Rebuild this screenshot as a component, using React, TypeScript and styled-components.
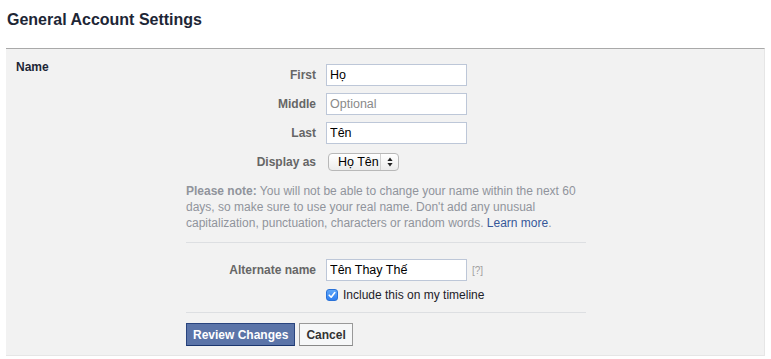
import React from 'react'
import styled, { createGlobalStyle } from 'styled-components'

const GlobalStyle = createGlobalStyle`
    body {
        margin: 0;
        background: #fff;
        font-family: "Liberation Sans", Arial, Helvetica, sans-serif;
        font-size: 12px;
        color: #1d2129;
    }
`;

const Header = styled.div`
    box-sizing: border-box;
    height: 48px;
    padding: 10px 7px 0;
`;

const Title = styled.h2`
    margin: 0;
    font-size: 16px;
    line-height: 20px;
    font-weight: bold;
    color: #1d2636;
`;

const Panel = styled.div`
    display: flex;
    width: 758px;
    margin: 0 6px;
    background: #f2f2f2;
    border-top: 1px solid #a9a9a9;
    border-right: 1px solid #e6e6e6;
    border-bottom: 1px solid #e6e6e6;
    padding-bottom: 9px;
`;

const Section = styled.div`
    box-sizing: border-box;
    width: 180px;
    padding: 11px 10px 0;
    font-weight: bold;
    font-size: 12px;
    line-height: 14px;
    color: #1d2636;
`;

const Content = styled.div`
    width: 400px;
    padding-top: 15px;
`;

const FieldGrid = styled.div<{ $top?: number }>`
    display: grid;
    grid-template-columns: 130px 141px auto;
    column-gap: 10px;
    row-gap: 7px;
    align-items: center;
    margin-top: ${p => p.$top || 0}px;
`;

const Label = styled.label`
    text-align: right;
    font-weight: bold;
    color: #666;
    font-size: 12px;
`;

const TextInput = styled.input`
    box-sizing: border-box;
    width: 141px;
    height: 22px;
    margin: 0;
    padding: 3px 3px 4px;
    border: 1px solid #bdc7d8;
    background: #fff;
    font-family: inherit;
    font-size: 12.5px;
    color: #000;
    outline: none;

    &::placeholder {
        color: #8a8a8a;
    }
`;

const Select = styled.div`
    box-sizing: border-box;
    display: flex;
    align-items: stretch;
    width: 71px;
    height: 18px;
    margin-left: 2px;
    border: 1px solid #b8b8b8;
    border-radius: 4px;
    background: linear-gradient(#ffffff, #ececec);
    font-size: 12.5px;
    color: #000;
`;

const SelectValue = styled.span`
    flex: 1;
    padding-left: 9px;
    line-height: 16px;
`;

const SelectArrows = styled.span`
    width: 17px;
    border-left: 1px solid #d0d0d0;
    display: flex;
    align-items: center;
    justify-content: center;
`;

const Note = styled.p`
    margin: 10px 0 0;
    font-size: 12px;
    line-height: 16px;
    color: #90949c;

    b {
        font-weight: bold;
    }

    a {
        color: #365899;
        text-decoration: none;
    }
`;

const Divider = styled.div<{ $top: number }>`
    height: 1px;
    background: #dddfe2;
    margin-top: ${p => p.$top}px;
`;

const Help = styled.span`
    margin-left: -5px;
    color: #a0a0a0;
    font-size: 10px;
`;

const CheckRow = styled.label`
    display: flex;
    align-items: center;
    gap: 5px;
    margin: 8px 0 0 140px;
    height: 12px;
    font-size: 12px;
    color: #1d2129;
`;

const CheckBox = styled.span`
    box-sizing: border-box;
    width: 12px;
    height: 12px;
    border-radius: 3px;
    background: linear-gradient(#5ea6f8, #2f7ff0);
    border: 1px solid #2a72d8;
    display: flex;
    align-items: center;
    justify-content: center;
`;

const Buttons = styled.div`
    display: flex;
    gap: 4px;
    margin-top: 10px;
`;

const Button = styled.button<{ $primary?: boolean }>`
    box-sizing: border-box;
    height: 23px;
    margin: 0;
    padding: 0 6px;
    font-family: inherit;
    font-size: 12px;
    font-weight: bold;
    color: ${p => p.$primary ? '#fff' : '#333'};
    background: ${p => p.$primary ? '#5b74a8' : '#f6f7f8'};
    border: 1px solid ${p => p.$primary ? '#29447e' : '#999'};
    border-bottom-color: ${p => p.$primary ? '#1a356e' : '#888'};
    cursor: pointer;
`;

const App: React.FC = () => {
    return (
        <>
            <GlobalStyle />
            <Header>
                <Title>General Account Settings</Title>
            </Header>
            <Panel>
                <Section>Name</Section>
                <Content>
                    <FieldGrid>
                        <Label>First</Label>
                        <TextInput defaultValue="Họ" />
                        <span />
                        <Label>Middle</Label>
                        <TextInput placeholder="Optional" />
                        <span />
                        <Label>Last</Label>
                        <TextInput defaultValue="Tên" />
                        <span />
                        <Label style={{ lineHeight: '22px' }}>Display as</Label>
                        <Select>
                            <SelectValue>Họ Tên</SelectValue>
                            <SelectArrows>
                                <svg width="6" height="10" viewBox="0 0 6 10">
                                    <path d="M3 0.5 L5.6 4 H0.4 Z M3 9.5 L5.6 6 H0.4 Z" fill="#222" />
                                </svg>
                            </SelectArrows>
                        </Select>
                        <span />
                    </FieldGrid>
                    <Note>
                        <b>Please note:</b> You will not be able to change your name within the next 60 days,
                        so make sure to use your real name. Don't add any unusual capitalization, punctuation,
                        characters or random words. <a href="#">Learn more</a>.
                    </Note>
                    <Divider $top={11} />
                    <FieldGrid $top={16}>
                        <Label>Alternate name</Label>
                        <TextInput defaultValue="Tên Thay Thế" />
                        <Help>[?]</Help>
                    </FieldGrid>
                    <CheckRow>
                        <CheckBox>
                            <svg width="8" height="8" viewBox="0 0 8 8">
                                <path d="M1.2 4.2 L3.2 6.2 L6.8 1.6" fill="none" stroke="#fff" strokeWidth="1.6" strokeLinecap="round" strokeLinejoin="round" />
                            </svg>
                        </CheckBox>
                        Include this on my timeline
                    </CheckRow>
                    <Divider $top={11} />
                    <Buttons>
                        <Button $primary>Review Changes</Button>
                        <Button>Cancel</Button>
                    </Buttons>
                </Content>
            </Panel>
        </>
    )
}

export default App
